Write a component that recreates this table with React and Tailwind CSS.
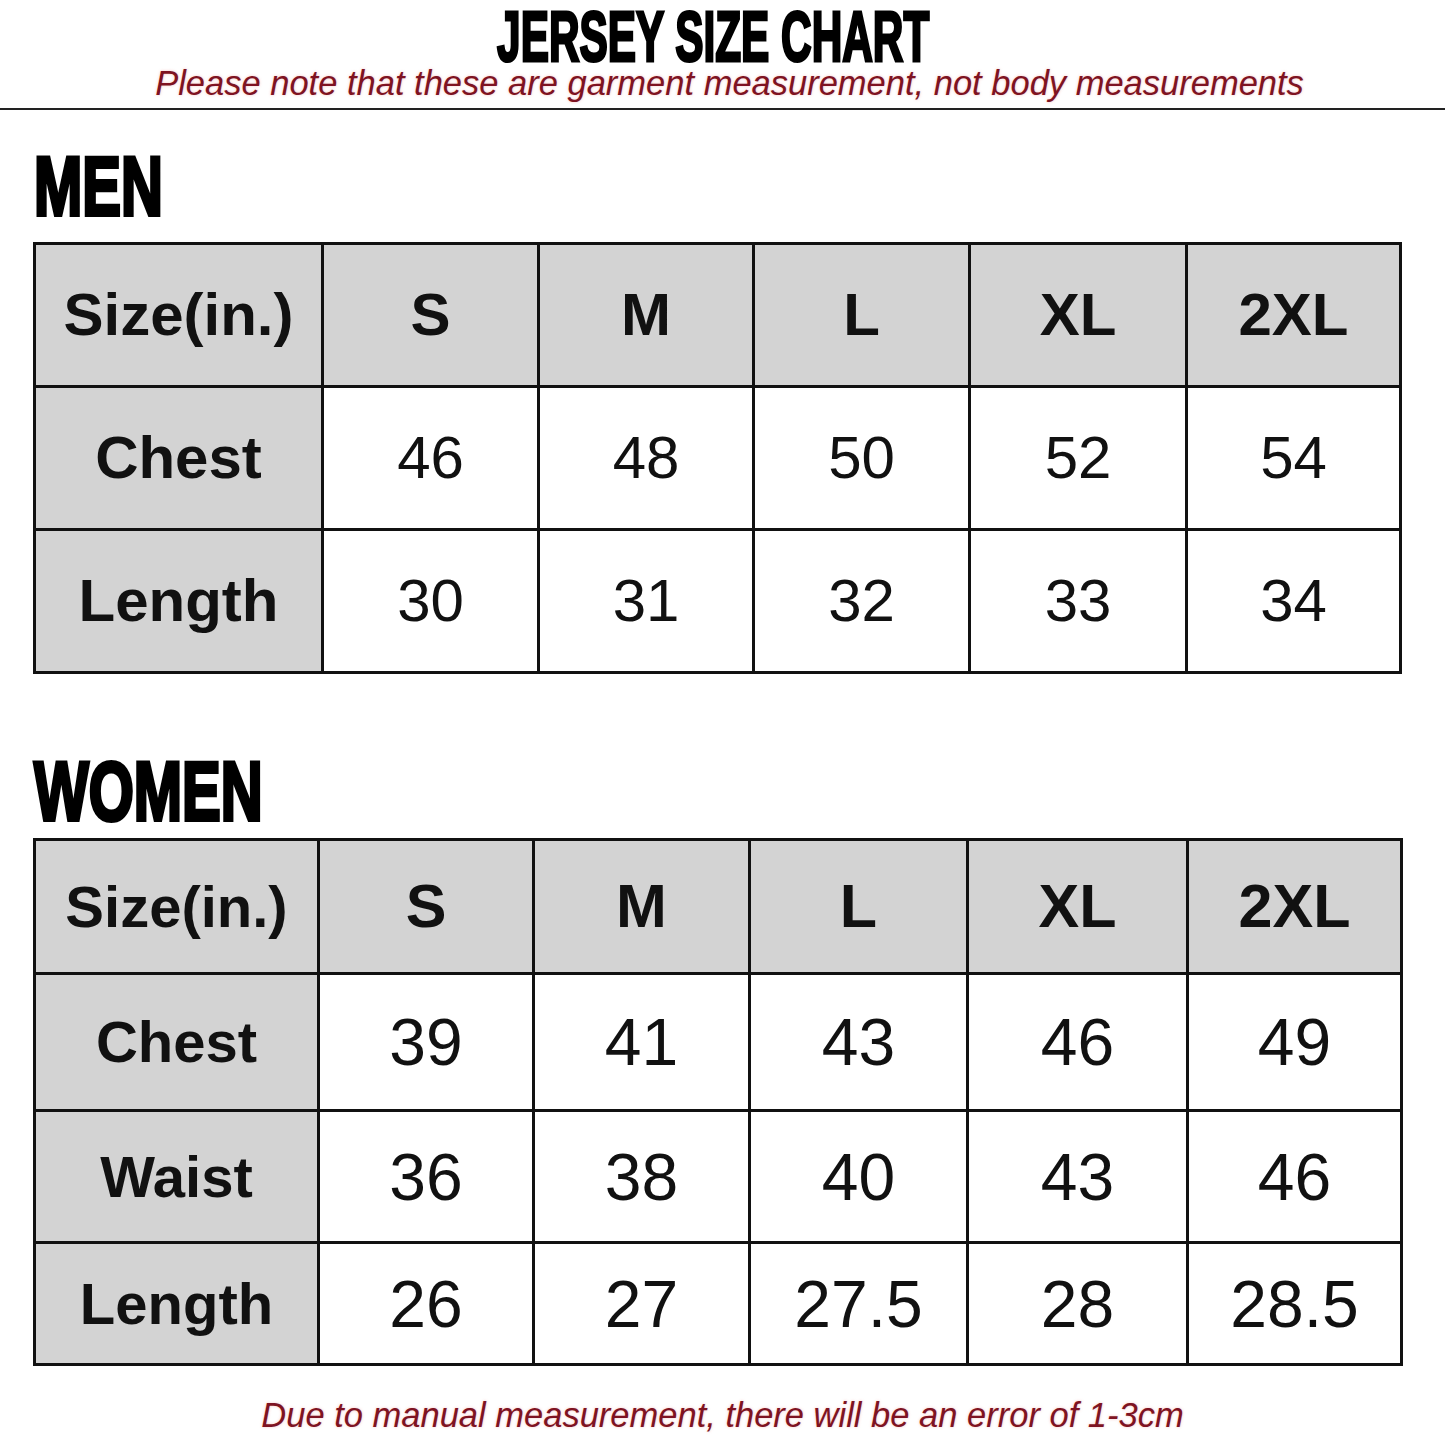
import React from "react";

const sans = "font-['Liberation_Sans',Arial,sans-serif]";

function Cell({ children, gray, bold, size, h }) {
  return (
    <div
      className={`flex items-center justify-center ${gray ? "bg-[#d3d3d3]" : "bg-white"} ${bold ? "font-bold" : "font-normal"} text-[#111] leading-none`}
      style={{ fontSize: size, height: h }}
    >
      {children}
    </div>
  );
}

function SizeTable({ cols, rows, heights, labelSize, headSize, numSize }) {
  const headers = ["Size(in.)", "S", "M", "L", "XL", "2XL"];
  return (
    <div className={`grid gap-[3px] bg-[#111] p-[3px] ${sans} ${cols}`}>
      {headers.map((h, i) => (
        <Cell key={h} gray bold size={i === 0 ? labelSize : headSize} h={heights[0]}>
          {h}
        </Cell>
      ))}
      {rows.map((r, ri) => (
        <React.Fragment key={r[0]}>
          {r.map((v, ci) => (
            <Cell
              key={ci}
              gray={ci === 0}
              bold={ci === 0}
              size={ci === 0 ? labelSize : numSize}
              h={heights[ri + 1]}
            >
              {v}
            </Cell>
          ))}
        </React.Fragment>
      ))}
    </div>
  );
}

function Heading({ children, className }) {
  return (
    <div className={`h-[84px] leading-[84px] ${className}`}>
      <span className={`inline-block origin-left scale-x-[0.69] text-[84px] font-bold text-black ${sans} [-webkit-text-stroke:4px_#000]`}>
        {children}
      </span>
    </div>
  );
}

export default function App() {
  return (
    <div className="w-[1445px] h-[1445px] bg-white overflow-hidden flex flex-col">
      <div className="mt-[8px] h-[58px] leading-[58px] text-center">
        <span className={`inline-block ml-[-18px] scale-x-[0.605] text-[70px] font-bold text-black ${sans} [-webkit-text-stroke:3px_#000]`}>
          JERSEY SIZE CHART
        </span>
      </div>
      <div className={`h-[34px] leading-[34px] pl-[14px] text-center italic text-[34.5px] text-[#7e1322] ${sans} [text-shadow:0_0_3px_rgba(230,80,80,0.35)]`}>
        Please note that these are garment measurement, not body measurements
      </div>
      <div className="mt-[8px] h-[2px] bg-[#222]" />

      <Heading className="mt-[34px] ml-[34px]">MEN</Heading>
      <div className="mt-[14px] ml-[33px] w-[1369px]">
        <SizeTable
          cols="grid-cols-[285px_213px_212px_213px_214px_1fr]"
          heights={[140, 140, 140]}
          labelSize="60px"
          headSize="60px"
          numSize="60px"
          rows={[
            ["Chest", "46", "48", "50", "52", "54"],
            ["Length", "30", "31", "32", "33", "34"],
          ]}
        />
      </div>

      <Heading className="mt-[75px] ml-[34px]">WOMEN</Heading>
      <div className="mt-[5px] ml-[33px] w-[1370px]">
        <SizeTable
          cols="grid-cols-[281px_212px_213px_215px_217px_1fr]"
          heights={[131, 134, 129, 119]}
          labelSize="58px"
          headSize="61px"
          numSize="66px"
          rows={[
            ["Chest", "39", "41", "43", "46", "49"],
            ["Waist", "36", "38", "40", "43", "46"],
            ["Length", "26", "27", "27.5", "28", "28.5"],
          ]}
        />
      </div>

      <div className={`mt-[32px] h-[34px] leading-[34px] text-center italic text-[34.5px] text-[#7e1322] ${sans} [text-shadow:0_0_3px_rgba(230,80,80,0.35)]`}>
        Due to manual measurement, there will be an error of 1-3cm
      </div>
    </div>
  );
}
